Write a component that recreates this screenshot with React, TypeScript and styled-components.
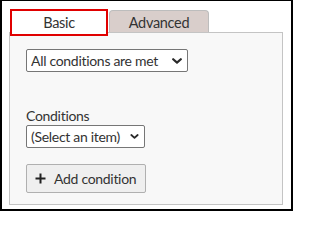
import styled, { createGlobalStyle } from 'styled-components';

const GlobalStyle = createGlobalStyle`
    html, body {
        margin: 0;
        padding: 0;
        background: #ffffff;
    }
    * {
        box-sizing: border-box;
    }
`;

const chevron = encodeURIComponent(
    "<svg xmlns='http://www.w3.org/2000/svg' viewBox='0 0 10 6'><path d='M1.2 1.2 5 4.6 8.8 1.2' fill='none' stroke='#2a2a2a' stroke-width='2.2' stroke-linecap='round' stroke-linejoin='round'/></svg>"
);

const Frame = styled.div`
    width: 293px;
    height: 211px;
    border: 2px solid #000;
    border-top-width: 1px;
    padding: 8px 8px 4px 7px;
    display: flex;
    flex-direction: column;
    font-family: Lato, 'Noto Sans', sans-serif;
    font-size: 14px;
    letter-spacing: -0.3px;
    color: #333;
    background: #fff;
`;

const TabRow = styled.div`
    display: flex;
    align-items: flex-start;
    height: 23px;
    padding-left: 1px;
    gap: 1px;
`;

const Tab = styled.div<{ $active?: boolean }>`
    display: flex;
    align-items: center;
    justify-content: center;
    width: ${(p) => (p.$active ? '98px' : '100px')};
    height: ${(p) => (p.$active ? '27px' : '22px')};
    margin-top: ${(p) => (p.$active ? '0' : '1px')};
    padding-top: ${(p) => (p.$active ? '0' : '2px')};
    font-size: 14.5px;
    background: ${(p) => (p.$active ? '#ffffff' : '#d9cecb')};
    border: ${(p) => (p.$active ? '2px solid #e00000' : '1px solid #bdbdbd')};
    border-bottom-width: ${(p) => (p.$active ? '2px' : '0')};
    border-radius: ${(p) => (p.$active ? '0' : '4px 4px 0 0')};
    position: relative;
    z-index: ${(p) => (p.$active ? 1 : 0)};
`;

const Panel = styled.div`
    flex: 1;
    border: 1px solid #c4c4c4;
    background: #f8f8f8;
    padding: 16px 16px 0 16px;
    display: flex;
    flex-direction: column;
    align-items: flex-start;
`;

const Select = styled.select<{ $width: number; $arrow: number }>`
    appearance: none;
    width: ${(p) => p.$width}px;
    height: 23px;
    font-family: inherit;
    font-size: 14px;
    letter-spacing: -0.3px;
    color: #333;
    background-color: #fff;
    background-image: url("data:image/svg+xml,${chevron}");
    background-repeat: no-repeat;
    background-size: ${(p) => p.$arrow}px ${(p) => Math.round(p.$arrow * 0.6)}px;
    background-position: right 5px center;
    border: 1px solid #767676;
    border-radius: 2px;
    padding: 0 0 0 4px;
`;

const Label = styled.div`
    margin-top: 34px;
    line-height: 19px;
    height: 19px;
`;

const Button = styled.button`
    margin-top: 16px;
    display: flex;
    align-items: center;
    gap: 8px;
    height: 29px;
    width: 120px;
    padding: 0 8px;
    white-space: nowrap;
    font-family: inherit;
    font-size: 14px;
    letter-spacing: -0.3px;
    color: #333;
    background: #efefef;
    border: 1px solid #b0b0b0;
    border-radius: 2px;
`;

const App = () => {
    return (
        <Frame>
            <GlobalStyle />
            <TabRow>
                <Tab $active>Basic</Tab>
                <Tab>Advanced</Tab>
            </TabRow>
            <Panel>
                <Select $width={162} $arrow={10} defaultValue='all'>
                    <option value='all'>All conditions are met</option>
                    <option value='any'>Any condition is met</option>
                </Select>
                <Label>Conditions</Label>
                <Select $width={119} $arrow={9} defaultValue=''>
                    <option value=''>(Select an item)</option>
                </Select>
                <Button>
                    <svg width='11' height='11' viewBox='0 0 11 11'>
                        <path d='M5.5 0.5v10M0.5 5.5h10' stroke='#222' strokeWidth='2' />
                    </svg>
                    Add condition
                </Button>
            </Panel>
        </Frame>
    );
};

export default App;
